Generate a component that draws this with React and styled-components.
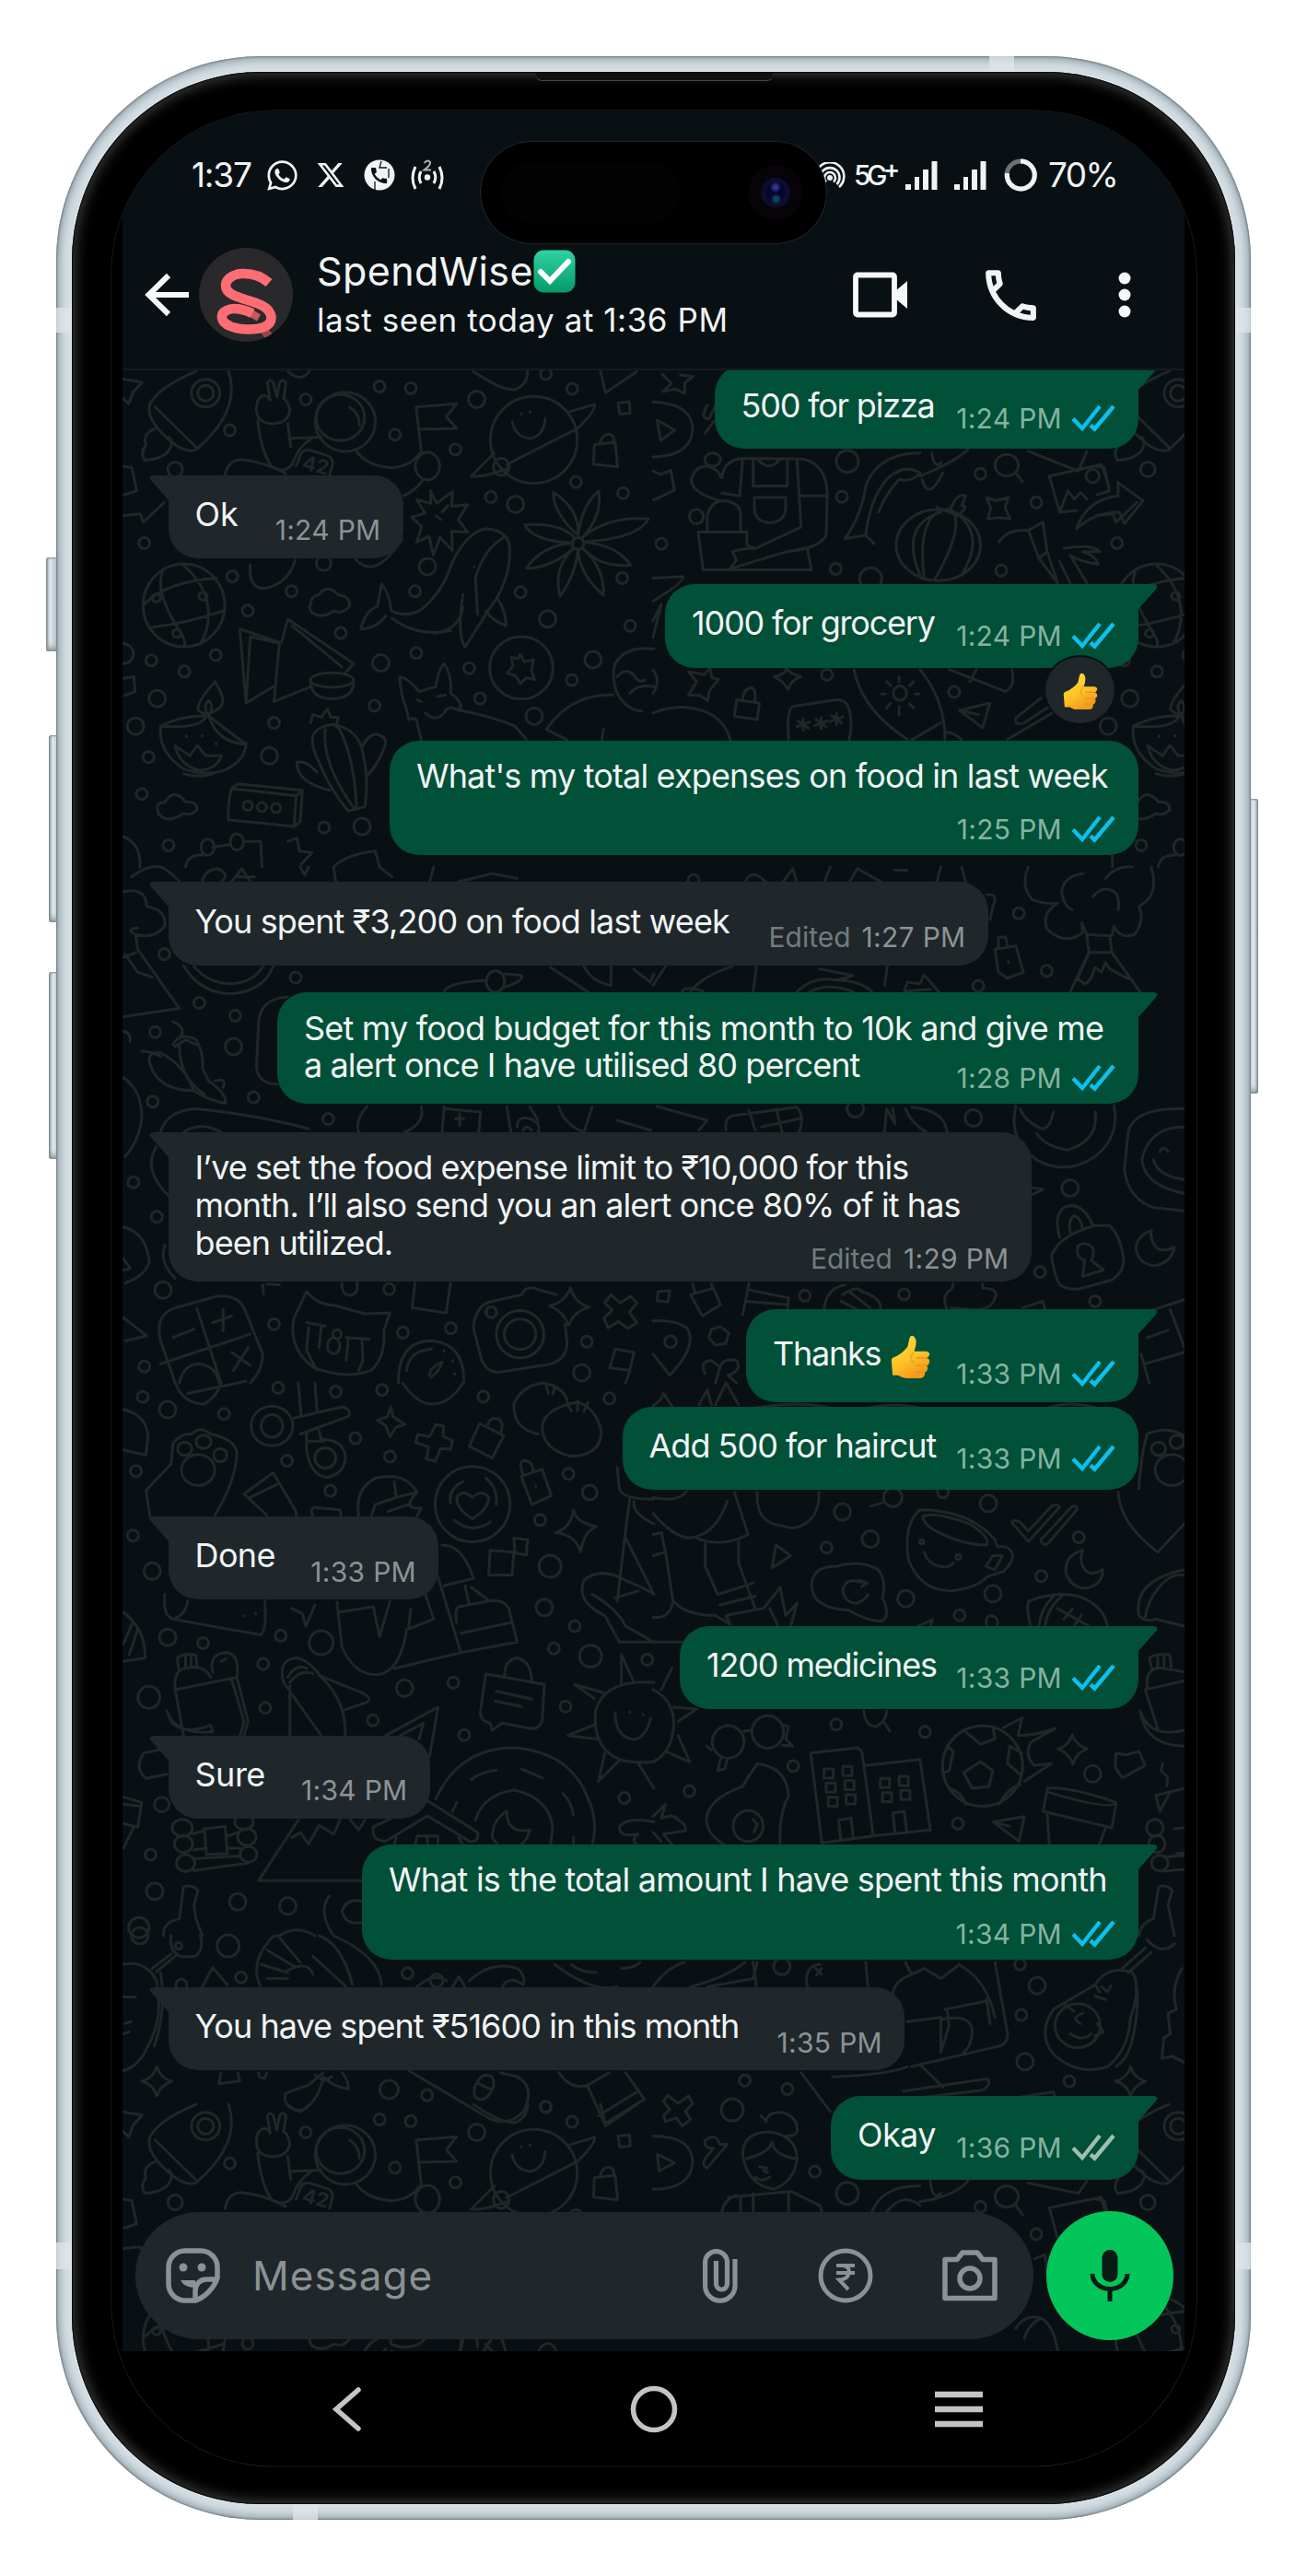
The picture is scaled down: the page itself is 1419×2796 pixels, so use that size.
import React from "react";
import styled, { createGlobalStyle } from "styled-components";
import { FaWhatsapp } from "react-icons/fa";
import { FaXTwitter } from "react-icons/fa6";
import { MdCall, MdOutlineCall } from "react-icons/md";

const c = {
  app: "#091014",
  bubbleIn: "#1f272a",
  bubbleOut: "#015038",
  text: "#f1f4f5",
  metaIn: "#8b9396",
  metaOut: "#84b3a1",
  tick: "#0cc0f0",
  line: "#1f2729",
  muted: "#8a9295",
};

const GlobalStyle = createGlobalStyle`
  *, *::before, *::after { box-sizing: border-box; }
  body { margin: 0; background: #fff; font-family: "Inter", "Noto Sans", sans-serif; }
  svg { display: block; flex: none; }
`;

/* ---------- phone hardware ---------- */

const Page = styled.main`
  display: flex;
  width: 1419px;
  height: 2796px;
  padding: 61px 0 0 61px;
  background: #fff;
  overflow: hidden;
`;

const Phone = styled.div`
  position: relative;
  flex: none;
  width: 1297px;
  height: 2674px;
  padding: 17px;
  border-radius: 222px;
  background: #d3dee4;
  box-shadow: inset 0 0 2px 1px #717c82, inset 0 0 10px 4px #92a1a9;
`;

const Bezel = styled.div`
  height: 100%;
  padding: 42px 42px 41px 43px;
  border-radius: 205px;
  background: #000;
  box-shadow: 0 0 2px 1px #dfe8ec, inset 0 0 1px 1px #0a0a0a, inset 0 0 15px 2px #484848;
`;

const Screen = styled.div`
  display: flex;
  flex-direction: column;
  height: 100%;
  padding: 0 13px 0 12px;
  overflow: hidden;
  border-radius: 177px;
  background: #000;
  box-shadow: 0 0 0 0.6px #242728;
`;

const SideButton = styled.i`
  position: absolute;
  z-index: -1;
  top: ${(p) => p.$y}px;
  ${(p) => (p.$right ? "right: -8px;" : `left: -${p.$out}px;`)}
  width: 14px;
  height: ${(p) => p.$h}px;
  border-radius: 3px;
  background: linear-gradient(90deg, #8c989e, #dfe8ec 30%, #b8c4ca 80%);
  box-shadow: inset 0 0 2px 1px #7f8b90, inset 0 -8px 6px -4px #8d999f;
  ${(p) => p.$right && "transform: scaleX(-1);"}
`;

const Stack = styled.div`
  position: relative;
  z-index: 0;
`;

const Band = styled.i`
  position: absolute;
  ${(p) => p.$pos}
  width: ${(p) => p.$w}px;
  height: ${(p) => p.$h}px;
  background: rgba(222, 230, 232, 0.75);
`;

const Earpiece = styled.i`
  position: absolute;
  top: 18px;
  left: 521px;
  width: 257px;
  height: 9px;
  border-bottom: 1px solid #454545;
  border-radius: 0 0 6px 6px;
  background: #111;
`;

const Island = styled.div`
  position: absolute;
  top: 93px;
  left: 461px;
  display: flex;
  align-items: center;
  width: 375px;
  height: 110px;
  padding-left: 21px;
  border-radius: 55px;
  background: #000;
  box-shadow: 0 0 0 0.6px #33383a;
`;

const Sensor = styled.i`
  width: 196px;
  height: 66px;
  border-radius: 33px;
  background: #030303;
`;

const Camera = styled.i`
  display: grid;
  place-items: center;
  width: 60px;
  height: 60px;
  margin-left: 73px;
  border-radius: 50%;
  background: #070308;
  &::after {
    content: "";
    width: 32px;
    height: 32px;
    border-radius: 50%;
    background: radial-gradient(circle at 50% 32%, #34348c 0 2px, transparent 6px),
      radial-gradient(circle at 52% 72%, #10485e 0 2px, transparent 6px),
      radial-gradient(circle, #050530 0 9px, #0d0e2e 12px 16px);
  }
`;

/* ---------- app bars ---------- */

const AppWindow = styled.div`
  display: flex;
  flex-direction: column;
  width: 1153px;
  height: 2433px;
  background: ${c.app};
`;

const StatusBar = styled.div`
  display: flex;
  align-items: center;
  height: 36px;
  margin-top: 52px;
  padding-left: 75px;
  color: ${c.text};
  line-height: 36px;
`;

const Slot = styled.div`
  display: flex;
  flex: none;
  width: ${(p) => p.$w}px;
  margin-left: ${(p) => p.$ml || 0}px;
`;

const StatusText = styled.span`
  font-size: ${(p) => p.$size || 37}px;
  font-weight: ${(p) => p.$weight || 400};
  letter-spacing: ${(p) => p.$ls}px;
  white-space: nowrap;
`;

const Plus = styled.span`
  font-size: 27px;
  font-weight: 600;
  line-height: 24px;
`;

const Header = styled.header`
  display: flex;
  align-items: center;
  height: 102px;
  margin-top: 61px;
  padding-left: 24px;
  color: ${c.text};
`;

const Avatar = styled.div`
  flex: none;
  width: 102px;
  height: 102px;
  margin-left: 10px;
  overflow: hidden;
  border-radius: 50%;
  background: #29292b;
`;

const Contact = styled.div`
  align-self: flex-start;
  width: 582px;
  margin-left: 26px;
`;

const Name = styled.div`
  display: flex;
  align-items: center;
  height: 50px;
  font-size: 43px;
  line-height: 50px;
  letter-spacing: 0.4px;
`;

const Seen = styled.div`
  margin-top: 3px;
  font-size: 35px;
  line-height: 50px;
  letter-spacing: 0.55px;
  white-space: nowrap;
`;

const Divider = styled.div`
  height: 2px;
  margin-top: 29px;
  background: #141c20;
`;

/* ---------- conversation ---------- */

const Chat = styled.section`
  position: relative;
  display: flex;
  flex: 1;
  flex-direction: column;
  min-height: 0;
  overflow: hidden;
`;

const Wallpaper = styled.svg`
  position: absolute;
  top: 0;
  left: 0;
  fill: none;
  stroke: ${c.line};
  stroke-width: 3;
  stroke-linecap: round;
  stroke-linejoin: round;
  text {
    fill: ${c.line};
    stroke: none;
    font: 700 22px "Inter", sans-serif;
  }
`;

const Messages = styled.div`
  position: relative;
  display: flex;
  flex-direction: column;
  padding: 0 50px 0 49.5px;
`;

const Bubble = styled.article`
  position: relative;
  display: grid;
  align-self: ${(p) => (p.$out ? "flex-end" : "flex-start")};
  width: ${(p) => p.$w}px;
  height: ${(p) => p.$h}px;
  margin-top: ${(p) => p.$mt}px;
  padding: ${(p) => p.$pt + 1.5}px ${(p) => (p.$out ? 24 : 24)}px ${(p) => p.$pb}px 29px;
  border-radius: 32px;
  ${(p) => p.$tail && (p.$out ? "border-top-right-radius: 0;" : "border-top-left-radius: 0;")}
  background: ${(p) => (p.$out ? c.bubbleOut : c.bubbleIn)};
`;

const TailShape = styled.svg`
  position: absolute;
  top: 0;
  ${(p) => (p.$out ? "right: -21px;" : "left: -21px; transform: scaleX(-1);")}
  fill: ${(p) => (p.$out ? c.bubbleOut : c.bubbleIn)};
`;

const Body = styled.div`
  grid-area: 1 / 1;
  color: ${c.text};
  font-size: 36px;
  line-height: 40.8px;
`;

const Line = styled.div`
  display: flex;
  letter-spacing: ${(p) => p.$ls}px;
  white-space: pre;
`;

const Meta = styled.div`
  display: flex;
  grid-area: 1 / 1;
  align-items: center;
  align-self: end;
  justify-self: end;
  height: 30px;
  color: ${(p) => (p.$out ? c.metaOut : c.metaIn)};
  font-size: 30px;
  line-height: 30px;
  letter-spacing: 0.3px;
  white-space: nowrap;
`;

const Edited = styled.span`
  margin-right: 12px;
  color: #737b7e;
  letter-spacing: 0;
`;

const TickIcon = styled.svg`
  margin-left: 10px;
  fill: none;
  stroke: ${(p) => (p.$read ? c.tick : "#a3bdb4")};
  stroke-width: 4.4;
`;

const Reaction = styled.div`
  position: absolute;
  right: 24px;
  bottom: -62px;
  z-index: 1;
  display: grid;
  place-items: center;
  width: 79px;
  height: 76px;
  padding-top: 3px;
  border: 2px solid ${c.app};
  border-radius: 50%;
  background: ${c.bubbleIn};
`;

const Composer = styled.form`
  position: relative;
  display: flex;
  align-items: center;
  margin-top: auto;
  padding: 0 12px 12px 14px;
`;

const Field = styled.label`
  display: flex;
  align-items: center;
  width: 975px;
  height: 138px;
  padding-left: 33px;
  border-radius: 69px;
  background: ${c.bubbleIn};
  color: ${c.muted};
`;

const Placeholder = styled.span`
  width: 489px;
  margin-left: 35px;
  font-size: 44px;
  letter-spacing: 1px;
`;

const MicButton = styled.button`
  display: grid;
  place-items: center;
  width: 138px;
  height: 140px;
  margin-left: 14px;
  padding: 0;
  border: 0;
  border-radius: 50%;
  background: #02c65a;
`;

const NavBar = styled.nav`
  display: flex;
  align-items: center;
  height: 125px;
  padding-left: 227px;
`;

/* ---------- wallpaper drawing ---------- */

const oval = (x, y, rx, ry) =>
  `M${x - rx} ${y}a${rx} ${ry} 0 1 0 ${2 * rx} 0a${rx} ${ry} 0 1 0 ${-2 * rx} 0`;

const sparkle = (x, y) =>
  `M${x} ${y - 36}q8 28 36 36q-28 10-36 36q-8-28-36-36q28-8 36-36z`;

const sheets = [
  {
    x: 0, y: 380, sx: 0.4528, sy: 0.35714,
    dots: "733,147 910,108 985,113 1143,147,9 551,241 947,254 1092,299 420,360,8 1372,115 1309,70 1381,398 1494,432 1177,444 1236,466,9 346,584 557,685 699,730 594,789 776,645,8 1025,655,9 995,730 1248,733 1313,814,9 1492,690 1511,835 817,857 517,924 363,940 442,974 377,1056,9 913,948,9 998,918 1125,964 1151,1056 1281,1110,9 1422,938,9 1371,1000 898,1078 657,1130 325,1140,9 646,1230,9 356,1234 340,1346 404,1502 777,1448 868,1445,9",
    paths: [
      "M548 62Q580 180 470 300Q450 310 420 285Q345 210 360 160Q380 110 470 62M372 170L470 292M375 235Q340 250 350 285Q335 310 347 332Q380 330 400 310Q420 280 405 262",
      oval(493, 128, 34, 42) + oval(493, 128, 19, 24),
      "M618 210Q625 300 650 350Q680 375 700 345Q715 290 745 268M690 220L697 290M700 265L770 262M618 150Q605 210 645 220Q690 225 695 180Q690 150 680 145L686 95Q676 82 670 98L664 140L655 95Q645 82 641 98L648 150Q635 120 618 150",
      oval(828, 215, 72, 90) + oval(816, 202, 58, 70) + "M838 170Q862 190 862 225",
      "M710 350L722 310Q728 298 745 302L785 318Q800 325 797 345L790 378M540 378Q545 330 580 330Q640 340 685 372M855 305Q880 350 940 355Q985 350 1005 312M1012 395Q1000 420 968 440",
      "M1010 305L998 170L1095 160L1070 200L1095 235L1003 238" + oval(1025, 350, 29, 42),
      oval(1280, 270, 104, 132) + "M1228 215Q1235 260 1270 266Q1305 258 1307 205M1250 190v2M1271 184v2M1365 185L1425 162Q1430 180 1385 235L1215 345M1185 310L1130 380Q1160 385 1220 355" + oval(1202, 352, 19, 26),
      "M1482 158l27-4l2 34l-25 4zM1425 285l50-8l6 75l-58-8zM1438 283q5-28 20-30q16 0 14 26M1440 62l12 65l75-65M1135 62q70 60 100 55q30-15 30-55M690 62q30 35 52 0M296 85l45 10l-22 30l-10 35l-14-16",
      "M1060 490l14-20M1045 500l12 12M1032 425l15 38l38-36l-2 45l38-5l-22 45l22 38l-38-2l2 58l-30-40l-16 55l-10-58l-30 18l12-48l-24-28l32-12l-20-42l34 12z",
      "M1386 560Q1325 490 1327 430Q1390 480 1386 560Q1395 470 1435 425Q1445 500 1398 565Q1460 500 1555 510Q1530 570 1400 580Q1480 590 1512 650Q1440 660 1398 600Q1450 660 1447 742Q1390 680 1386 605Q1380 680 1343 745Q1325 660 1375 600Q1320 660 1262 660Q1300 590 1375 583Q1280 580 1258 528Q1340 520 1376 565" + oval(1386, 585, 14, 18),
      "M865 845Q875 790 905 775L915 708Q935 740 938 790Q970 810 1005 790Q1060 740 1085 640Q1120 550 1165 540Q1220 545 1222 600Q1225 700 1170 790Q1140 850 1115 900Q1095 860 1110 740M940 812Q1000 870 1080 850M865 845Q900 845 925 805M1110 780Q1100 850 1040 858M1140 690Q1160 600 1210 565M1140 690L1145 800M1195 755Q1215 800 1213 835Q1180 820 1165 790M1137 655v1",
      oval(441, 773, 98, 126) + "M390 670Q370 730 430 850Q450 890 440 898M345 770Q400 700 520 690M360 840Q440 830 535 790M440 650Q500 720 500 800Q500 850 480 890" + oval(375, 750, 10, 12) + oval(487, 745, 10, 12) + oval(424, 858, 10, 12),
      "M600 650Q595 720 632 722Q690 710 708 636M745 770Q745 745 765 740Q785 705 812 742Q840 745 838 775Q825 800 800 790Q770 815 748 795Q738 780 745 770M852 632Q900 700 965 570",
      "M575 845L670 885M575 845L590 1070L655 1020M600 870L590 1070M670 885L657 1065L745 1020M690 815L675 885M690 815L848 950L830 975M600 868L668 888M700 835L820 960" + oval(796, 1000, 52, 22) + "M745 1005Q745 1055 796 1057Q848 1055 848 1005",
      oval(1250, 963, 76, 95) + "M1247 922l10 22l22-6l-5 32l8 28l-20-5l-14 18l-12-24l-20-8l14-22l-4-26l16 4z",
      "M980 1120L975 1090Q960 1040 958 990Q980 995 1005 1035L1045 1020Q1050 970 1065 950Q1085 990 1080 1040Q1105 1060 1105 1085L1095 1090Q1180 1110 1235 1140L1262 1180M980 1120Q1000 1110 1000 1130L1010 1182M1000 1060l10 5M1048 1050l20-4M1020 1100Q1045 1130 1065 1100Q1075 1075 1095 1090M1310 1150Q1370 1040 1470 1045M1310 1150L1360 1182M1447 1150l-4 32",
      "M1568 905Q1500 895 1475 950Q1465 990 1480 1040Q1500 1090 1540 1095M1480 990Q1500 960 1520 985Q1530 1010 1545 1000M1510 1040Q1530 1010 1568 1020",
      "M385 1140Q440 1105 495 1110Q480 1150 385 1140M500 1108Q520 1130 590 1195Q520 1190 500 1108M385 1145Q380 1220 440 1270Q500 1295 545 1270Q590 1240 590 1190M440 1285Q480 1300 520 1280M515 1005Q470 1070 475 1090Q490 1115 520 1090Q550 1070 515 1005M500 1108Q485 1080 500 1062Q515 1080 500 1108M420 1200l35 30l18-32l20 32l38 0Q520 1270 480 1275Q430 1260 420 1200M447 1170v2M485 1168v2M518 1192v2",
      "M745 1130l5-25l20 8l15-25l8 25l18 0l-5 30M750 1170Q760 1140 800 1135Q860 1150 870 1220Q885 1300 875 1385L835 1398Q790 1330 765 1250Q745 1200 750 1170M780 1150Q770 1250 850 1392M810 1140Q850 1230 855 1390M870 1200Q880 1170 900 1165Q935 1170 920 1210Q905 1260 880 1290M760 1280Q730 1240 712 1250Q710 1310 790 1335",
      "M555 1330L570 1315L725 1335L710 1352zM555 1330Q545 1380 548 1425L705 1445L710 1352M705 1445L720 1430L725 1335" + oval(594, 1382, 11, 14) + oval(628, 1386, 11, 14) + oval(662, 1389, 11, 14),
      "M380 1405Q370 1370 395 1372Q415 1325 445 1370Q475 1370 472 1395Q455 1415 440 1405Q400 1440 380 1405M445 1568Q450 1530 485 1532M510 1508L550 1500M585 1490L625 1490L628 1568" + oval(498, 1508, 16, 25) + oval(568, 1492, 16, 25) + "M690 1490L712 1480L718 1520L748 1525L722 1560M800 1568Q830 1530 900 1520L910 1568M296 1475Q340 1500 335 1568",
      oval(296, 920, 24, 30) + "M296 995l25-5l3 45l-25 12M296 350l20 5l12 70l-30 12M296 500l40-5l8 25l50-60",
    ],
  },
  {
    x: 709, y: 380, sx: 0.4528, sy: 0.35714,
    dots: "785,373 919,460 453,443 20,586 438,662 835,667 466,335,12 522,692,12 417,984 722,1036",
    paths: [
      "M22 70l22 28l-20 25l30-8l22 14l0-32l20-20l-30-4M0 155Q95 160 95 240Q90 320 0 322M10 210L52 240L18 272zM130 165Q110 210 135 205L150 165M125 250L145 215",
      "M0 365l18 10l25-12l8 60l-50 30",
      "M165 385Q170 330 215 326L360 328Q415 345 418 430L415 560Q400 600 320 610L370 598L380 665L120 665L108 550L225 550L225 590L245 600L355 535L345 330M215 326L208 440M165 432L208 440M352 440L415 440M240 330L240 410L322 410L322 330M243 445L318 445L318 480Q315 520 280 522Q245 520 243 480zM250 328Q280 370 305 328M190 610Q210 600 245 600M190 610L200 635L185 662Q240 640 320 610M130 550L130 500Q140 455 170 455Q210 460 210 500L210 550M160 455Q90 430 92 390Q100 350 130 350Q160 360 163 385" + oval(143, 330, 19, 20) + oval(104, 503, 17, 22),
      "M460 570Q500 500 510 410Q540 310 640 310M530 585L510 560L460 570M510 560Q520 450 560 390Q600 340 640 370Q620 400 590 390Q560 430 540 490M640 380Q720 340 755 300M645 390Q660 460 695 370M668 310Q675 360 690 340",
      oval(684, 590, 101, 108) + "M715 480Q630 480 650 690M715 480Q750 530 675 695M690 490Q590 530 640 680M725 490Q800 560 740 680M680 475L730 500Q760 470 740 470L750 440Q730 430 715 475M800 445l22 10l30-10l-8 30l12 35l-28-4l-26 4l8-32z",
      oval(848, 347, 28, 33) + "M870 370l16 28M900 305L1020 365L1040 305M950 380L1075 345L1090 400M950 380L975 490L1015 485M975 490L995 425L1010 450L1025 430L1040 450" + oval(1054, 380, 16, 20) + "M1015 540Q1040 450 1115 440L1115 400L1175 455L1130 525L1118 490Q1060 490 1015 540M830 580Q850 540 900 545L935 520L945 610L925 630L970 705M900 545L925 630M945 610L970 705M985 600Q1050 585 1072 610L1030 610Q1060 620 1068 648Q1020 640 1000 620L1040 705M975 640L1000 705",
      "M0 690L72 685Q78 700 0 760M0 820L20 770L0 870",
      "M85 1045l20-40l-20-30l38 8l14-20l4 30l16 5l-22 35l-4 30l-18-16zM320 965q-5 20-30 25q20 10 34 38q6-28 30-38q-24-8-34-25M200 1060l55 10l-5 50l-55-10zM215 1062Q215 1030 235 1022Q250 1030 243 1068M0 970Q20 1000 0 1040M0 1100Q60 1070 110 1090Q170 1110 185 1182M325 1182Q320 1090 335 1080L440 1060Q465 1060 470 1090Q480 1130 470 1182M345 1142l30-14M348 1124l24 22M360 1118v34M388 1138l30-14M391 1120l24 22M403 1114v34M425 1126l30-14M428 1108l24 22M440 1102v34",
      "M482 968Q500 1090 610 1180M640 968Q700 1060 700 1180M620 1182L690 1130M700 1160Q720 1155 740 1182" + oval(592, 1040, 16, 22) + "M590 990v16M590 1080v25M548 1042h10M628 1042h10M560 1005l10 12M625 1005l-10 12M560 1085l10-15M625 1085l-10-12M710 968L845 1035Q870 1020 860 968M775 968L760 1005M735 1092L808 1070L790 1145zM735 1092L780 1105M870 1115L930 1055M870 1115Q865 1140 890 1130L950 1080M850 1180L970 1090",
    ],
  },
  {
    x: 0, y: 940, sx: 0.4528, sy: 0.35714,
    dots: "394,265 709,336 478,413 564,452 372,502 560,546,9 608,700 366,713 787,766 320,958 376,1063 391,1286,9 657,1390 966,1415 1081,1402 1407,1443 1395,1537,9 346,1518 933,1283 1178,1353",
    paths: [
      "M315 30Q370-20 400 10Q430 40 430 45M296 75Q350 60 352 120Q400 130 395 180Q370 220 325 205Q300 190 330 185M325 205L330 250L430 430L296 455M300 265L330 320L365 335M296 275l30-15M485 45Q490 10 520 5Q555 20 530 45M555 45L580 5L600 45M570 30h40M720 0l10 25l10-25M800 0l5 45M910 0l30 30M1040 0l-10 45M1100 45l80-25l60 15",
      "M440 300Q480 385 555 385Q630 380 655 302M465 302Q500 355 555 355Q610 350 630 302",
      "M1065 380Q1070 350 1165 345" + oval(1188, 348, 22, 32) + "M1210 325L1250 330Q1258 345 1210 365M1320 305L1410 380M1400 302Q1420 350 1465 360L1465 302M1520 312l40 38l8-25",
      "M690 395Q625 400 620 470L615 610Q620 660 665 660M415 540Q430 500 470 525Q490 570 485 610L500 650Q545 690 540 718Q500 710 465 680Q380 680 360 600Q350 560 385 565Q440 600 465 680M430 520Q450 490 415 470M385 575Q360 560 340 560M420 545L445 525L470 540M430 545Q430 640 490 690M515 650Q545 640 535 670M296 640Q340 680 340 760Q335 830 300 880M296 500Q315 505 312 530",
      "M385 806Q400 740 470 735Q600 750 740 795M440 806Q480 770 530 806M860 806Q850 770 880 728M1010 728Q1020 780 970 806M1065 728L1060 806M1068 735L1152 745L1148 806M1092 765h20M1102 750v36M1215 728L1225 806M1240 790Q1240 755 1270 765Q1300 780 1290 806M1255 800Q1260 780 1275 800M1270 728L1290 770M1340 728Q1350 780 1400 806L1420 728M1480 770L1560 800",
      "M375 850Q340 920 405 1000M296 1095Q350 1110 358 1200Q350 1240 300 1265M296 1190L312 1220L296 1225M395 1150Q380 1200 420 1250M296 1370L352 1425L300 1440",
      "M385 1440Q370 1360 420 1340L520 1305Q570 1300 585 1340L630 1480Q630 1530 600 1568M385 1440L420 1568M472 1342L530 1568M385 1510L600 1420M415 1430L465 1405M535 1345V1410M510 1385L555 1365M555 1475L600 1515M595 1460L560 1530M430 1568Q440 1510 480 1510Q520 1520 525 1568",
      "M735 1290Q760 1330 800 1332L875 1358L935 1355L920 1410Q925 1490 890 1530Q830 1560 750 1520Q690 1460 705 1370Q720 1330 735 1290M735 1385L780 1395M830 1430L885 1435M740 1400L735 1470L760 1530M770 1400L765 1460M835 1435L830 1500M868 1440L870 1500L860 1530" + oval(808, 1420, 10, 14) + oval(800, 1455, 15, 24),
      "M1135 1400Q1140 1330 1180 1320L1250 1300Q1260 1275 1280 1280L1305 1290L1335 1300M1135 1400L1155 1500Q1170 1540 1200 1535L1300 1515Q1355 1510 1360 1450L1355 1390" + oval(1247, 1420, 57, 72) + oval(1247, 1420, 38, 46) + oval(1178, 1353, 12, 16) + "M1368 1280q10 45 45 58q-35 10-50 55q-10-40-45-60q35-8 50-53",
      "M1465 1300l22 25l25-20l15 20l-18 28l18 32l-22 18l-22-22l-25 20l-10-30l20-24l-18-22zM820 1265Q818 1300 840 1302Q860 1298 856 1265M995 1265L988 1340L1070 1355L1080 1265M630 1270l2 28M640 1268l30 2M955 1568Q955 1440 1035 1440Q1115 1450 1112 1568M975 1530Q980 1470 1035 1465M1030 1545Q1030 1520 1060 1505Q1055 1530 1035 1550M1065 1470v2M1085 1500v2M1090 1540v2M1475 1465L1520 1475L1510 1530L1462 1522zM1510 1530L1500 1568",
    ],
  },
  {
    x: 709, y: 940, sx: 0.4528, sy: 0.35714,
    dots: "877,141 944,316 780,362 768,763,9 928,1231 364,1303 602,1299 1000,976,9 485,735,9 97,40 1060,1320",
    paths: [
      "M900 0Q880 60 910 100Q940 115 970 110Q930 140 945 190Q990 240 1030 200L1028 170L1040 205L1100 210L1105 180Q1120 220 1155 205Q1180 160 1165 120Q1210 90 1198 20L1195 0M1030 20Q980 30 980 80Q985 120 1005 130M1085 35Q1110-5 1150 0M1055 90Q1080 50 1110 80Q1120 100 1115 130M1040 205L1045 260M1095 210L1100 260L1168 380M1045 260L1100 260M1045 260L1000 380M1045 262L1018 340L1035 355Q1050 350 1060 305L1075 320L1085 290L1095 310L1140 340",
      "M220 48Q235 0 270 45M310 48L335 5L345 48M410 48L425 0M470 48L490 5L550 48M680 48L690 0M740 0L750 48M800 85Q830 80 815 120L808 160M580 10L610 10",
      "M820 250L870 240L888 320L850 338L828 320zM828 245L828 215L845 212L850 240M852 288v3",
      "M0 360Q20 320 30 302M90 378Q120 330 190 302M240 380L248 302M70 378Q80 360 120 378M345 380Q380 335 430 342Q500 345 525 380M375 380Q420 350 480 380M555 360L562 302M400 310L480 330L440 345M602 375L610 350L640 355L650 328L685 380M605 378l60-6",
      "M10 728L130 770L110 800M175 800Q170 760 195 755L345 730Q365 760 350 806M230 740L245 800M295 735L310 806M260 790L350 765M555 806L560 735L580 780L575 735M605 735Q620 780 655 806M620 730Q700 740 705 806M870 725Q850 830 920 890Q990 940 1060 880Q1120 820 1105 725M1060 745Q1070 830 995 860Q940 850 920 810M960 745Q950 800 930 795Q890 770 880 735",
      "M1274 735Q1160 730 1140 800L1130 920Q1140 1010 1200 1035L1274 1045M1274 790Q1190 790 1172 890Q1180 970 1274 992M1215 865Q1222 845 1235 865M1200 890Q1210 940 1274 950",
      "M910 975L935 980L910 995",
      "M970 1150L955 1180Q960 1230 975 1270Q1000 1290 1030 1280L1100 1255Q1130 1230 1128 1190Q1120 1120 1095 1090L1060 1090Q1000 1110 970 1150M975 1125Q960 1060 985 1035Q1020 1015 1045 1065L1055 1090M1000 1110Q995 1070 1010 1060Q1025 1065 1030 1100M1030 1245L1035 1195Q1010 1185 1020 1150Q1040 1135 1055 1160Q1058 1185 1050 1195L1080 1225z",
      "M1195 1105Q1160 1120 1158 1160Q1165 1210 1205 1212Q1245 1200 1250 1155Q1230 1170 1210 1160Q1190 1135 1195 1105",
      "M90 1300L145 1280L162 1330L118 1365zM100 1290L95 1268M145 1285L140 1268M12 1290l28-2l-4 34l-26-4zM215 1360L220 1330L230 1265M230 1285L325 1310M225 1320L320 1330M325 1310L322 1350M410 1345Q415 1280 460 1270M455 1300Q490 1270 500 1290Q550 1310 545 1345M450 1320L490 1345M470 1290L520 1340M705 1345Q690 1300 715 1285L720 1268M715 1340L760 1345Q810 1350 820 1310Q830 1280 790 1280L790 1268M885 1340L935 1320L940 1345",
      "M0 1380Q50 1375 80 1400Q110 1450 40 1545L0 1480" + oval(42, 1443, 14, 18) + "M140 1405l22-8l20 20l-8 32l-24 4l-16-22zM125 1540Q110 1500 140 1500L160 1520Q170 1490 200 1500Q215 1530 180 1545L200 1568M160 1520L150 1568",
      "M1190 1350L1274 1315M1240 1345L1274 1460M1185 1430L1235 1408M1170 1480L1190 1568M1180 1510L1274 1475",
    ],
  },
  {
    x: 0, y: 1500, sx: 0.4528, sy: 0.38265,
    dots: "342,40 402,76,9 537,88 667,14 805,25 916,20 1159,39 1461,44 852,157 935,209 688,221 326,250 792,306 1363,258 1414,311,8 1295,389 319,433 365,534,9 1319,520,12 1305,637,9 1378,690 1328,753 1416,775,12 402,722,9 487,738 673,717 770,737,13 631,797 357,892,12 636,922 970,866,9 1087,850 894,957 1113,999 1356,918 388,1196,8 361,1338 1497,1177 570,1472,9 690,1484,9 371,1442,9 333,1545,11 1552,785",
    paths: [
      "M420 0Q440 60 490 60Q520 40 530 0M450 30L590-5M296 75Q350 90 355 150L350 205L296 190M965 0Q1000 60 1035 60Q1080 60 1110 0",
      "M410 230L350 305L360 380M410 230L415 170Q440 140 460 145Q480 120 505 145Q565 160 568 200Q565 280 515 375" + oval(443, 187, 17, 19) + oval(488, 167, 18, 19) + oval(528, 205, 16, 19) + oval(475, 247, 40, 44),
      oval(652, 122, 50, 56) + oval(652, 122, 26, 32) + "M715 0L722 90M755 0L760 80M705 100L820 68Q845 75 835 95L720 145M735 140L735 190Q745 265 785 268Q830 255 828 205Q820 160 770 160L765 135M735 165L775 165" + oval(780, 213, 25, 29),
      "M937 68l6 28l28 22l-22 8l-14 26l-10-30l-20-16l24-10zM1045 118l18 4l0 30l22 12l-5 24l-24-2l-12 36l-22-6l6-34l-32-14l6-22l28 6zM1150 115L1208 150L1180 213L1125 180zM1170 118Q1175 95 1195 102Q1210 115 1200 142",
      "M1290 145Q1230 130 1232 60Q1250 10 1300 0Q1350 10 1360 50M1300 120Q1300 190 1370 208Q1440 205 1442 140Q1430 70 1385 55Q1310 70 1300 120M1360 55l10 25M1385 50v28M1410 55l-10 26M1310 10l5 20M1330 8l-4 24",
      "M585 315L655 255L710 365M585 315L640 375M600 325L668 285M710 365V378M750 378Q740 345 765 355L815 360L818 378M860 378Q850 300 900 270Q970 250 1000 310L950 325L900 345L890 378M950 325L945 280M1000 310Q960 360 1010 355L1000 378M980 345L930 365",
      oval(1133, 344, 90, 107) + "M1080 340Q1075 300 1110 280M1165 270Q1195 300 1190 345M1090 390Q1130 430 1175 395M1133 385Q1095 360 1095 325Q1110 300 1133 325Q1155 300 1172 325Q1170 360 1133 385",
      "M1250 265L1300 245L1322 320L1275 345zM1255 262Q1240 220 1260 220Q1280 225 1278 252M1285 292v2M1375 360Q1380 395 1430 408Q1400 420 1392 480Q1380 430 1332 425Q1370 410 1375 360",
      "M1175 475L1232 480L1228 545L1172 545zM1232 440L1265 445L1262 488L1235 482zM1060 460Q1110 460 1135 555L1065 575M1045 530L1105 765L945 810M1105 765L1240 735L1220 640Q1210 615 1175 618L1100 635Q1090 640 1095 680M1105 710L1225 680M1115 575L1125 630M1130 580L1170 615",
      "M395 600Q390 660 415 670L625 715Q640 700 635 618M415 670Q445 660 450 618M585 660v2M613 653v2M700 640l25 15l8 35l22-60M808 622L820 750Q850 830 905 828Q960 820 975 700L1040 670L1020 600M815 650L895 635L910 720L935 620M980 690L985 640M296 650Q350 700 348 780L296 790M296 740L318 680M310 770L330 700",
      "M420 870L568 835L595 960L585 1000M420 870L440 1000M555 840L585 960Q580 990 575 1000M420 870Q415 810 450 808Q490 800 505 835M428 810L425 780Q440 765 470 772L472 808M445 775v28M458 772v30M510 820Q500 770 540 765Q575 765 568 835M530 790l12-8M400 930Q420 1000 510 990L505 970Q450 1000 412 965z",
      "M680 850Q665 785 710 780Q740 785 770 835Q830 900 828 1000M680 850L770 1000M695 860V1000M765 830L870 880Q900 900 870 910L820 930M690 835Q710 795 735 810M695 850Q720 810 750 825M925 1000L1050 920L1030 1060M960 1000L1015 965L1005 1010",
      "M1165 825L1305 855L1300 960Q1290 985 1270 980L1205 965L1180 985L1175 965Q1150 960 1152 930zM1210 830Q1210 785 1240 780Q1275 790 1275 850M1190 875L1275 897M1188 903L1250 918",
      "M1568 850Q1450 840 1428 930Q1420 1040 1490 1070Q1530 1080 1568 1075M1425 895L1378 855L1450 880M1430 1010L1362 1000L1425 970M1490 850L1490 770L1520 850M1450 1050L1435 1130L1485 1070M1475 935Q1475 1005 1520 1012Q1550 1005 1560 950M1510 933v2M1542 940v2M1530 1078L1568 1150",
      "M1480 240L1485 300Q1490 330 1568 330M1510 330L1502 400L1480 620M1500 440L1568 600M1520 335Q1515 370 1568 400M1400 560Q1440 520 1500 560Q1560 590 1568 600M1400 560Q1380 620 1450 660L1485 735L1568 735M1420 600Q1480 640 1500 690L1568 735M1475 610L1530 590",
      "M345 1050Q320 1090 350 1122L400 1110M345 1050L385 1040M296 1175L340 1190L330 1260L296 1250M320 1262L296 1320M296 1195L335 1200",
      oval(437, 1262, 24, 24) + oval(440, 1308, 22, 24) + oval(445, 1362, 22, 24) + oval(585, 1245, 22, 22) + oval(592, 1288, 22, 24) + oval(596, 1337, 20, 22) + "M490 1265L540 1258L545 1335L495 1338zM460 1280L490 1270M465 1325L495 1320M545 1285L572 1275M548 1320L575 1320M465 1350L575 1342M465 1383L595 1362",
      "M715 1240L620 1412L868 1412M700 1290L720 1275L740 1308L765 1255L800 1280L815 1240M840 1240l20 28l15-28",
      "M895 1260L1025 1185L1145 1275Q1150 1305 1125 1300L1025 1228L925 1300Q890 1300 895 1260M950 1290L945 1312M1100 1290L1110 1312M995 1312L1000 1285L1050 1285L1050 1312M1025 1285V1312",
      "M1045 1180Q1100 1035 1235 1035Q1370 1050 1410 1180Q1435 1240 1420 1312M1140 1240Q1160 1165 1235 1155Q1320 1180 1325 1265L1320 1312M1130 1125Q1150 1105 1190 1098M1250 1095L1300 1120M1350 1165Q1370 1190 1375 1225M1085 1215L1095 1190M1375 1290V1312M1215 1215Q1180 1240 1180 1290L1195 1312M1215 1215Q1215 1280 1270 1268Q1265 1300 1245 1312M1568 1245Q1500 1230 1485 1260Q1485 1290 1530 1280Q1510 1300 1530 1312",
      "M440 1430Q460 1420 475 1440L465 1480L470 1520L485 1568M440 1430L430 1520Q390 1530 392 1568M790 1455Q760 1500 800 1568M868 1470Q830 1460 820 1500Q830 1540 868 1530M670 1568Q710 1535 755 1568",
    ],
  },
  {
    x: 709, y: 1500, sx: 0.4528, sy: 0.38265,
    dots: "454,366,9 804,342,9 521,443,9 416,467 606,612,9 815,598,9 735,659 931,548 1021,438 439,969 652,990 336,1087 87,1158 731,1250 1054,1109,9 695,310 575,325,10",
    paths: [
      "M0 65Q20 50 25 30L45 65M110 62L130 20L140 62M150 62L175 0L205 62M250 70Q350 50 420 70M520 70Q580 55 635 70M950 70Q1000 50 1060 70",
      "M0 325Q60 340 80 308M0 370Q50 440 90 440Q150 430 178 335M195 310L228 430Q160 470 105 440M125 455L125 520L155 600M205 450L205 510L245 640M155 600L240 568M160 630L245 605M175 660L260 640M175 660L185 685M0 430L20 425L30 480L0 490M30 480L48 620Q40 670 0 665M50 620Q80 660 150 660L185 685",
      "M250 310Q245 400 310 405Q330 415 345 410Q400 390 398 310M522 350L550 340",
      "M295 460L330 490L285 525zM385 550Q395 520 440 520Q500 500 540 530Q560 560 550 610Q570 660 550 675Q520 680 470 645Q400 640 385 600Q375 575 385 550M500 565Q460 550 455 590Q460 625 490 625Q510 615 515 600M495 560L515 568L500 578M265 640L305 580L318 660L345 625L330 690M280 640L300 690M635 690L670 672L665 690",
      "M640 360Q600 400 612 500Q640 590 715 590Q780 580 800 550L840 535Q870 500 860 480Q850 460 825 465L820 445Q760 360 640 360M648 378Q680 365 760 400Q810 440 800 460Q740 460 670 415Q645 395 648 378M815 490L838 490L820 530L798 520zM650 480Q660 520 700 522Q715 520 720 510" + oval(644, 451, 5, 6) + oval(732, 494, 6, 7),
      "M860 395Q865 385 880 395L900 420L955 350Q970 340 975 352L900 450zM930 445L1005 350Q1020 348 1015 362L945 458Q930 460 930 445M1030 475Q985 490 990 540Q1005 585 1040 582Q1080 570 1078 530Q1050 550 1035 530Q1020 505 1030 475",
      "M905 690Q895 640 900 620Q960 590 1020 605Q1080 630 1090 690M940 690Q945 640 980 605M925 690Q930 640 960 605M970 640L1045 690M985 670l20-28M1010 688l18-30M1115 310Q1120 400 1210 480L1274 400M1165 660Q1150 560 1274 530M1180 665Q1190 600 1230 560Q1250 540 1274 545M1165 660Q1180 680 1205 670L1274 690M800 690Q795 660 812 660Q830 665 825 690",
      "M1185 145Q1170 200 1165 300M1185 145Q1230 120 1274 150" + oval(1212, 187, 17, 19) + oval(1256, 167, 17, 19) + oval(1244, 247, 40, 44),
      "M1180 870L1274 845M1180 870L1210 980M1185 865Q1180 810 1215 808L1274 820M1195 808L1190 780Q1210 765 1240 772L1242 805M1210 775v28M1225 772v30M1168 930Q1180 1030 1274 1030M1168 930Q1190 1010 1274 985",
      "M45 810L20 870M0 870Q50 900 50 970Q45 1050 0 1075M50 920L105 925L60 960M60 1000L88 1075L30 1045M0 735H70",
      oval(180, 1018, 38, 46) + oval(275, 990, 38, 46) + "M218 988L238 985M140 1040L128 1030M162 1065L155 1100L172 1095L178 1065M312 970L325 975L318 1010L335 1030L310 1028",
      "M250 1080Q320 1090 325 1170Q300 1230 305 1310M250 1080Q220 1130 215 1145Q130 1180 128 1240Q130 1280 170 1310" + oval(228, 1257, 36, 44) + "M240 1238l10 14l-8 22M0 1230L30 1195L20 1235Q50 1220 60 1240Q80 1250 78 1270L25 1280L45 1308M0 1275L20 1300",
      "M378 1050L490 1035Q500 1040 502 1055L528 1285L405 1305zM510 1085L640 1068L665 1268L528 1285M450 1295L445 1240L475 1235L480 1290M580 1275L575 1220L602 1215L608 1270M410 1095h22v26h-22zM455 1088h22v26h-22zM415 1135h22v26h-22zM460 1128h22v26h-22zM420 1175h22v26h-22zM463 1168h22v26h-22zM545 1122h22v26h-22zM590 1116h22v26h-22zM550 1162h22v26h-22zM594 1156h22v26h-22z",
      oval(790, 1087, 96, 114) + "M785 1075L815 1100L805 1145L765 1150L745 1105zM750 990L785 1025L820 1010L815 975M705 1030L720 1045L710 1100L698 1105M885 1050L855 1030L850 1080L880 1110M710 1150Q740 1160 750 1195M880 1140Q850 1150 830 1195M840 978L885 950L875 1000Q920 1000 965 980L905 1020Q890 1060 915 1085L955 1080L890 1130",
      "M1005 998q8 30 36 40q-26 10-34 44q-8-30-36-44q26-8 34-40M1110 1050L1135 1055L1165 1045L1180 1085L1125 1120L1108 1090zM815 1245L890 1230L878 1300zM815 1245L855 1258M945 1150Q1000 1145 1110 1190Q1100 1215 945 1160zM945 1155L935 1215L1100 1262L1110 1195M945 1220L950 1310M1085 1262L1070 1310M505 930Q510 975 535 975Q560 960 560 930M555 965L568 988M1222 1080l-4 20l16 18l-2 25",
      "M1205 1170L1240 1160L1215 1215zM1240 1160L1274 1150M1250 1265L1274 1262M1255 1335L1274 1333M1225 1345L1274 1340M1220 1385L1274 1380" + oval(1203, 1262, 20, 24) + oval(1208, 1308, 20, 24) + oval(1215, 1362, 20, 22) + "M1212 1430Q1230 1420 1245 1440L1235 1480L1250 1568M1212 1430L1200 1520Q1170 1530 1165 1568",
    ],
  },
  {
    x: 0, y: 2100, sx: 0.4528, sy: 0.44389,
    dots: "547,25,12 578,102 977,92 1047,110,7 933,376,10 1024,390 1308,418 335,0,9 435,120",
    paths: [
      sparkle(376, 356),
      "M410 0Q405 45 440 52L470 50Q490 30 480 0M410 45L365 80M420 50L375 88M296 70Q350 60 375 110Q395 200 350 280Q330 320 296 330M385 90Q400 180 370 270M296 150L325 150M300 215l14-5M296 240l14-5" + oval(428, 25, 8, 8),
      "M485 125L510 78L545 120M625 125Q600 70 640 20Q650 0 665 0M625 70L690 90M640 35L705 75M670 5L720 65M640 105L690 105M765 0Q820 20 845 120M690 85Q740 60 750 95M750 50L830 125M800 0Q910 50 915 120M1000 125Q1040 90 1070 110M1085 125L1100 100L1115 125M1125 110Q1180 60 1240 80Q1260 95 1255 120Q1220 95 1205 125M1330 70Q1420 140 1480 125M1370 70Q1390 90 1430 90M1490 80Q1520 80 1535 65",
      "M530 335L525 362L575 355L570 335M620 335Q620 350 635 348L640 335M775 335L740 365L685 385Q675 420 720 430Q760 410 775 350M775 345Q800 370 835 375Q835 350 820 335M755 340l20 15l20-10M980 330L1170 445Q1220 470 1255 430Q1285 370 1240 345L1200 335M1150 350Q1160 335 1180 345Q1190 365 1175 385Q1160 410 1140 395Q1130 375 1150 350M1145 360l30 15M1340 335Q1370 380 1410 365L1460 335M1410 370L1450 460L1545 400L1500 335M1435 440L1530 380",
    ],
  },
  {
    x: 709, y: 2100, sx: 0.4528, sy: 0.44389,
    dots: "309,75,9 921,122,9 883,194 892,308,9 998,356 220,354 322,375 190,426,12 388,577 880,70 466,630,12 785,663 919,730",
    paths: [
      sparkle(1145, 356),
      "M0 125Q30 80 75 65M90 125Q180 100 220 65M130 125L240 105L250 65M240 65L248 125M370 125Q360 75 400 70M390 80l14 14M404 80l-12 16M510 65L515 125M605 65L620 95L650 80L690 105L735 70M620 95Q580 110 575 140M740 75Q800 110 820 200M820 65L850 240Q850 265 830 270L620 320M800 155L808 215M700 180L800 160M610 210L690 200L690 285M705 180L710 220L690 285M690 205Q760 190 765 230Q765 270 745 285M355 335L425 430M640 315L695 370M430 345Q560 340 610 320M600 380L800 350Q815 360 790 378L620 398M880 395L960 382L965 398",
      "M1150 90Q1090 70 1060 120L960 180Q920 240 960 290Q1020 345 1090 320Q1140 280 1145 200Q1170 130 1150 90M1155 100Q1170 160 1150 250Q1140 300 1110 320" + oval(1018, 220, 54, 54) + "M1060 118l10 20M1075 125l15 12l8-14M1060 148l25 8M970 195L990 170L1010 185M1030 190Q1000 200 1025 215M1065 215L1080 235L1060 245M1000 240Q1030 260 1050 240",
      "M1268 80Q1240 130 1255 180L1235 190L1240 240L1225 250L1220 300L1245 295L1274 310M1180 30L1125 80M1195 40L1140 90M1185 10Q1220 50 1250 20",
      "M35 390L60 410L85 392L95 410L78 430L90 450L70 465L55 445L30 455L25 440L40 425L25 405zM125 500Q150 480 160 510L178 510L130 568Q115 560 125 545L145 520Q120 520 125 500",
      "M215 535Q215 480 280 480Q345 490 345 545Q340 600 290 620Q225 610 215 535M225 545Q280 530 285 505Q290 535 340 545M270 455Q275 430 310 432Q350 445 345 480Q340 490 320 490M270 450L258 440M255 565l18 4M245 590Q260 605 280 590M265 575l10 4M0 490Q95 490 95 555Q90 620 0 620M10 535L52 555L15 575zM180 640L330 625L400 660L405 675M210 675V640M240 675V630M325 675V628M165 675Q170 645 200 635",
      "M525 675Q550 610 640 612M560 675Q600 625 640 660M640 650Q720 640 755 600M665 600Q670 650 690 630" + oval(848, 638, 28, 26) + "M870 660l16 22M900 605L1020 630L1040 600M950 665L1075 640L1085 680M950 665L970 740M870 960Q890 925 930 935Q960 950 970 1015M930 935Q900 950 890 985M915 790L940 780L950 870",
    ],
  },
];

const toDots = (sheet) =>
  sheet.dots.split(" ").map((d) => {
    const [x, y, r = 6] = d.split(",").map(Number);
    return [sheet.x + x * sheet.sx, sheet.y + y * sheet.sy, r];
  });

const Doodles = () => (
  <Wallpaper width="1153" height="2152" viewBox="133 401 1153 2152">
    <defs>
      <g id="rockets">
        {toDots(sheets[0]).map(([x, y, r], i) => (
          <circle key={i} cx={x} cy={y} r={r} />
        ))}
        <g transform="translate(0 380) scale(.4528 .35714)">
          {sheets[0].paths.map((d, i) => (
            <path key={i} d={d} vectorEffect="non-scaling-stroke" />
          ))}
        </g>
        <text x="327" y="508" transform="rotate(14 327 508)">42</text>
      </g>
    </defs>
    <use href="#rockets" />
    <use href="#rockets" y="1881" />
    {sheets.slice(1).map((sheet, n) => (
      <g key={n}>
        {toDots(sheet).map(([x, y, r], i) => (
          <circle key={i} cx={x} cy={y} r={r} />
        ))}
        <g transform={`translate(${sheet.x} ${sheet.y}) scale(${sheet.sx} ${sheet.sy})`}>
          {sheet.paths.map((d, i) => (
            <path key={i} d={d} vectorEffect="non-scaling-stroke" />
          ))}
        </g>
      </g>
    ))}
    <use href="#rockets" x="1056" />
    <use href="#rockets" x="1056" y="1881" />
  </Wallpaper>
);

/* ---------- small drawings ---------- */

const Ticks = ({ read }) => (
  <TickIcon $read={read} width="49" height="30" viewBox="0 0 49 30">
    <path d="M2 15.5L12 26L31 2M21 22.5L25.5 26.5L46 2" />
  </TickIcon>
);

const Thumb = ({ w, h }) => (
  <svg width={w} height={h} viewBox="0 0 42 46" preserveAspectRatio="none">
    <defs>
      <linearGradient id="skin" x1="0" y1="0" x2=".5" y2="1">
        <stop offset="0" stopColor="#ffd84a" />
        <stop offset=".6" stopColor="#ffc526" />
        <stop offset="1" stopColor="#f59a1b" />
      </linearGradient>
    </defs>
    <path
      fill="url(#skin)"
      d="M1 28Q0 24 4 23Q13 19 18 12L20 3Q22-1 25 2Q29 6 25 17H38Q42 18 41 21Q40 24 38 24Q42 25 41 29Q40 32 38 32Q40 33 39 36Q38 39 36 39Q37 44 32 45H18Q12 45 8 42H2Z"
    />
    <path d="M27 24H38M26 31.5H38M26 38.5H36" stroke="#e8912a" strokeWidth="1.4" />
    <path d="M24 18Q19 24 24 29" fill="none" stroke="#efa02c" strokeWidth="1.6" />
  </svg>
);

const Tail = ({ out }) => (
  <TailShape $out={out} width="22" height="29" viewBox="0 0 22 29">
    <path d="M0 0H18Q23 1 20.5 5L1 27V29H0Z" />
  </TailShape>
);

const Hotspot = () => (
  <svg width="36" height="34" viewBox="0 0 36 34" fill="none" stroke="#f1f4f5" strokeWidth="3">
    <circle cx="18" cy="19.5" r="3.2" fill="#f1f4f5" stroke="none" />
    <path d="M11 13Q7.5 19.5 11 26M25 13Q28.5 19.5 25 26M5 8Q-1 20 5 32M31 8Q37 20 31 32" />
    <path d="M14.5 4Q18-.5 21 3Q22 6 14.5 11.5H22" strokeWidth="2" stroke="#aab0b2" />
  </svg>
);

const Cast = () => (
  <svg width="34" height="28" viewBox="0 0 34 28" fill="none" stroke="#f1f4f5" strokeWidth="2.6">
    <circle cx="17" cy="17" r="3" fill="#f1f4f5" stroke="none" />
    <path d="M13 21.5A6 6 0 1 1 21 21.5M9.500 24A10.500 10.500 0 1 1 24.500 24M7 27A15.300 15.300 0 1 1 27 27" />
  </svg>
);

const Bars = () => (
  <svg width="35" height="31" viewBox="0 0 35 31" fill="#f1f4f5">
    <path d="M0 25h6v6H0zM10 17h5v14h-5zM19 9h6v22h-6zM28.5 0h6v31h-6z" />
  </svg>
);

const Battery = () => (
  <svg width="36" height="36" viewBox="0 0 36 36" fill="none" strokeWidth="5">
    <circle cx="18" cy="18" r="15" stroke="#6b7173" />
    <path d="M18 3A15 15 0 1 1 3.5 16" stroke="#f1f4f5" />
  </svg>
);

const Logo = () => (
  <svg width="102" height="102" viewBox="0 0 102 102" fill="none" stroke="#ff6d74" strokeWidth="10.5">
    <path d="M69 88L77 97" stroke="#93474c" strokeWidth="9" />
    <path d="M52 68L65 76" stroke="#c9565c" strokeWidth="8" />
    <path d="M76 38C66 29 55 27.500 46 28C34 29 29 36 29 41C29 49 38 52 50 56C64 60 77 64 78.500 75C79 86 66 88.500 53 88.500C40 88.500 26 84 25 76C24 68 35 65 44 66.500C50 67.500 54 69 58 71" />
  </svg>
);

const VerifiedEmoji = () => (
  <svg width="46" height="47" viewBox="0 0 46 47">
    <defs>
      <linearGradient id="verified" x1="0" y1="0" x2="0" y2="1">
        <stop offset="0" stopColor="#2fd3a4" />
        <stop offset="1" stopColor="#059a68" />
      </linearGradient>
    </defs>
    <rect x=".5" y=".5" width="45" height="46" rx="11" fill="url(#verified)" />
    <path d="M8 24L18 34L38 13" fill="none" stroke="#fff" strokeWidth="6" strokeLinecap="round" />
  </svg>
);

const Sticker = () => (
  <svg width="59" height="60" viewBox="0 0 59 60" fill="none" stroke={c.muted} strokeWidth="5.5">
    <path d="M56 32V21A18 18 0 0 0 38 3H21A18 18 0 0 0 3 21V39A18 18 0 0 0 21 57H32C42 54 53 43 56 32ZM32 57V46A12 12 0 0 1 44 34H56" />
    <path d="M16 35H32V43Q20 43 16 35Z" fill={c.muted} stroke="none" />
    <circle cx="19" cy="21" r="4.5" fill={c.muted} stroke="none" />
    <circle cx="39" cy="21" r="4.5" fill={c.muted} stroke="none" />
  </svg>
);

const Clip = () => (
  <svg width="38" height="60" viewBox="0 0 38 60" fill="none" stroke={c.muted} strokeWidth="5.2">
    <path d="M35 12V41A16.200 16.200 0 0 1 2.600 41V14.500A12 12 0 0 1 26.500 14.500V39A6 6 0 0 1 14.500 39V14" />
  </svg>
);

const Rupee = () => (
  <svg width="60" height="60" viewBox="0 0 60 60" fill="none" stroke={c.muted} strokeWidth="5">
    <circle cx="30" cy="30" r="27" />
    <path d="M20 19H40M20 27H40M21 19H26Q34 19.500 34 26Q33 34 23 34.500L33 45" strokeWidth="4" />
  </svg>
);

const CameraIcon = () => (
  <svg width="60" height="56" viewBox="0 0 60 56" fill="none" stroke={c.muted} strokeWidth="5.5" strokeLinejoin="round">
    <path d="M3 10.5H16L22 3H38L44 10.5H57V52.5H3Z" />
    <circle cx="30" cy="31" r="11" />
  </svg>
);

const Mic = () => (
  <svg width="44" height="58" viewBox="0 0 44 58" fill="none" stroke="#0a1a14" strokeWidth="5">
    <rect x="13.5" y="1" width="17" height="35" rx="8.5" fill="#0a1a14" stroke="none" />
    <path d="M3 27A19 16.5 0 0 0 41 27M22 43V57" />
  </svg>
);

const Back = () => (
  <svg width="49" height="48" viewBox="0 0 49 48" fill="none" stroke="#f5f7f8" strokeWidth="6">
    <path d="M26 3L4.5 24L26 45M5 24H48" />
  </svg>
);

const Video = () => (
  <svg width="60" height="50" viewBox="0 0 60 50" fill="none" stroke="#f5f7f8" strokeWidth="5.8">
    <rect x="3" y="3.5" width="42" height="43" rx="2" />
    <path d="M46 21L59 10V40L46 29Z" fill="#f5f7f8" stroke="none" />
  </svg>
);

const Dots = () => (
  <svg width="14" height="52" viewBox="0 0 14 52" fill="#f5f7f8">
    <circle cx="7" cy="8" r="6.5" />
    <circle cx="7" cy="26" r="6.5" />
    <circle cx="7" cy="44" r="6.5" />
  </svg>
);

/* ---------- data ---------- */

const messages = [
  { out: 1, tail: 1, mt: -6, w: 460.5, h: 91, pt: 22, pb: 18, time: "1:24 PM", lines: [["500 for pizza", -1.2]] },
  { tail: 1, mt: 29, w: 255, h: 90, pt: 20, pb: 16, time: "1:24 PM", lines: [["Ok", 0]] },
  { out: 1, tail: 1, mt: 28, w: 514, h: 91, pt: 20.5, pb: 20, time: "1:24 PM", reaction: 1, lines: [["1000 for grocery", -1.2]] },
  { out: 1, mt: 79, w: 813, h: 124, pt: 16.5, pb: 13, time: "1:25 PM", lines: [["What's my total expenses on food in last week", -0.84]] },
  { tail: 1, mt: 29, w: 890, h: 91, pt: 21.5, pb: 16, time: "1:27 PM", edited: 1, lines: [["You spent ₹3,200 on food last week", -0.86]] },
  { out: 1, tail: 1, mt: 29, w: 935, h: 121, pt: 17, pb: 13, time: "1:28 PM", lines: [["Set my food budget for this month to 10k and give me", -0.79], ["a alert once I have utilised 80 percent", -0.92]] },
  { tail: 1, mt: 31, w: 937, h: 162, pt: 16.5, pb: 10, time: "1:29 PM", edited: 1, lines: [["I’ve set the food expense limit to ₹10,000 for this", -0.94], ["month. I’ll also send you an alert once 80% of it has", -0.9], ["been utilized.", -0.9]] },
  { out: 1, tail: 1, mt: 30, w: 426, h: 101, pt: 26, pb: 16, time: "1:33 PM", thumb: 1, lines: [["Thanks", -1.25]] },
  { out: 1, mt: 5, w: 560.5, h: 90, pt: 20.5, pb: 19, time: "1:33 PM", lines: [["Add 500 for haircut", -1]] },
  { tail: 1, mt: 29, w: 293.5, h: 90, pt: 20, pb: 15.5, time: "1:33 PM", lines: [["Done", -0.6]] },
  { out: 1, tail: 1, mt: 29, w: 498, h: 90, pt: 20, pb: 19, time: "1:33 PM", lines: [["1200 medicines", -1.15]] },
  { tail: 1, mt: 29, w: 284, h: 90, pt: 20, pb: 16, time: "1:34 PM", lines: [["Sure", -0.5]] },
  { out: 1, tail: 1, mt: 28, w: 843, h: 125, pt: 16.5, pb: 13, time: "1:34 PM", lines: [["What is the total amount I have spent this month", -0.79]] },
  { tail: 1, mt: 30, w: 799.5, h: 90, pt: 20, pb: 15, time: "1:35 PM", lines: [["You have spent ₹51600 in this month", -0.94]] },
  { out: 1, tail: 1, mt: 28, w: 334, h: 91, pt: 20.5, pb: 20, time: "1:36 PM", unread: 1, lines: [["Okay", -0.6]] },
];

const Message = ({ m }) => (
  <Bubble $out={m.out} $tail={m.tail} $w={m.w} $h={m.h} $mt={m.mt} $pt={m.pt} $pb={m.pb}>
    {m.tail && <Tail out={m.out} />}
    <Body>
      {m.lines.map(([text, ls]) => (
        <Line key={text} $ls={ls}>
          {text}
          {m.thumb && (
            <Slot $ml={11} $w={43}>
              <Thumb w={43} h={48} />
            </Slot>
          )}
        </Line>
      ))}
    </Body>
    <Meta $out={m.out}>
      {m.edited && <Edited>Edited</Edited>}
      {m.time}
      {m.out && <Ticks read={!m.unread} />}
    </Meta>
    {m.reaction && (
      <Reaction>
        <Thumb w={38} h={41} />
      </Reaction>
    )}
  </Bubble>
);

export default function App() {
  return (
    <Page>
      <GlobalStyle />
      <Stack>
        <SideButton $y={544} $h={102} $out={11} />
        <SideButton $y={737} $h={203} $out={8} />
        <SideButton $y={994} $h={203} $out={8} />
        <SideButton $y={806} $h={320} $right />
        <Phone>
          <Bezel>
            <Screen>
              <AppWindow>
                <StatusBar>
                  <Slot $w={79}><StatusText $ls={-1.2}>1:37</StatusText></Slot>
                  <Slot $w={37} $ml={1}><FaWhatsapp size={37} /></Slot>
                  <Slot $w={32} $ml={18}><FaXTwitter size={32} /></Slot>
                  <Slot $w={33} $ml={20}>
                    <svg width="34" height="34" viewBox="0 0 34 34">
                      <circle cx="17" cy="17" r="16.5" fill="#f1f4f5" />
                      <MdCall x="5" y="6" size={23} color="#0a1014" />
                      <path d="M19 2l-2 7h8M27 10v10M12 24v9" stroke="#0a1014" strokeWidth="1.3" fill="none" />
                    </svg>
                  </Slot>
                  <Slot $w={36} $ml={18}><Hotspot /></Slot>
                  <Slot $w={34} $ml={402}><Cast /></Slot>
                  <Slot $w={46} $ml={9}>
                    <StatusText $size={30} $weight={500} $ls={-4.5}>5G</StatusText>
                    <Plus>+</Plus>
                  </Slot>
                  <Slot $w={35} $ml={10}><Bars /></Slot>
                  <Slot $w={35} $ml={18}><Bars /></Slot>
                  <Slot $w={36} $ml={19}><Battery /></Slot>
                  <Slot $w={76} $ml={12}><StatusText $ls={-1.6}>70%</StatusText></Slot>
                </StatusBar>
                <Header>
                  <Back />
                  <Avatar><Logo /></Avatar>
                  <Contact>
                    <Name>SpendWise<VerifiedEmoji /></Name>
                    <Seen>last seen today at 1:36 PM</Seen>
                  </Contact>
                  <Video />
                  <Slot $w={73} $ml={75}><MdOutlineCall size={73} /></Slot>
                  <Slot $w={14} $ml={80}><Dots /></Slot>
                </Header>
                <Divider />
                <Chat>
                  <Doodles />
                  <Messages>
                    {messages.map((m, i) => <Message key={i} m={m} />)}
                  </Messages>
                  <Composer>
                    <Field>
                      <Sticker />
                      <Placeholder>Message</Placeholder>
                      <Clip />
                      <Slot $w={60} $ml={87}><Rupee /></Slot>
                      <Slot $w={60} $ml={75}><CameraIcon /></Slot>
                    </Field>
                    <MicButton type="button" aria-label="Record"><Mic /></MicButton>
                  </Composer>
                </Chat>
              </AppWindow>
              <NavBar>
                <svg width="34" height="50" viewBox="0 0 34 50" fill="none" stroke="#c4c4c4" strokeWidth="5.5" strokeLinecap="round">
                  <path d="M29 4L5 25L29 46" />
                </svg>
                <Slot $w={52} $ml={290}>
                  <svg width="52" height="52" viewBox="0 0 52 52" fill="none" stroke="#c4c4c4" strokeWidth="5.5">
                    <circle cx="26" cy="26" r="22.5" />
                  </svg>
                </Slot>
                <Slot $w={52} $ml={279}>
                  <svg width="52" height="42" viewBox="0 0 52 42" fill="none" stroke="#c4c4c4" strokeWidth="6.5">
                    <path d="M0 5H52M0 21H52M0 37H52" />
                  </svg>
                </Slot>
              </NavBar>
            </Screen>
          </Bezel>
          <Band $pos="top: 273px; left: 0;" $w={17} $h={27} />
          <Band $pos="top: 273px; right: 0;" $w={17} $h={27} />
          <Band $pos="bottom: 272px; left: 0;" $w={17} $h={29} />
          <Band $pos="bottom: 272px; right: 0;" $w={17} $h={29} />
          <Band $pos="top: 0; left: 1013px;" $w={27} $h={17} />
          <Band $pos="bottom: 0; left: 257px;" $w={27} $h={17} />
          <Earpiece />
          <Island>
            <Sensor />
            <Camera />
          </Island>
        </Phone>
      </Stack>
    </Page>
  );
}
